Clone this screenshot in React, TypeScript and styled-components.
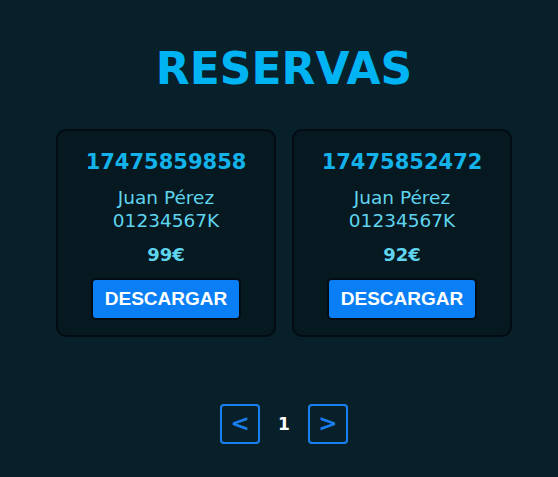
import styled, { createGlobalStyle } from "styled-components";

type Reserva = {
  id: string;
  nombre: string;
  dni: string;
  precio: number;
};

const reservas: Reserva[] = [
  { id: "17475859858", nombre: "Juan Pérez", dni: "01234567K", precio: 99 },
  { id: "17475852472", nombre: "Juan Pérez", dni: "01234567K", precio: 92 },
];

function App() {
  return (
    <>
      <GlobalStyle />
      <Page>
        <Title>RESERVAS</Title>
        <CardList>
          {reservas.map((r) => (
            <Card key={r.id}>
              <CardId>{r.id}</CardId>
              <Client>
                {r.nombre}
                <br />
                {r.dni}
              </Client>
              <Price>{r.precio}€</Price>
              <DownloadButton>DESCARGAR</DownloadButton>
            </Card>
          ))}
        </CardList>
        <Pagination>
          <PageButton>&lt;</PageButton>
          <PageNumber>1</PageNumber>
          <PageButton>&gt;</PageButton>
        </Pagination>
      </Page>
    </>
  );
}

const GlobalStyle = createGlobalStyle`
  html, body {
    margin: 0;
    padding: 0;
    background: #08202a;
  }
  body {
    font-family: "DejaVu Sans", Verdana, sans-serif;
  }
`;

const Page = styled.main`
  min-height: 477px;
  box-sizing: border-box;
  padding: 41px 0 0 10px;
  display: flex;
  flex-direction: column;
  align-items: center;
  background: #08202a;
`;

const Title = styled.h1`
  margin: 0;
  font-size: 44px;
  font-weight: bold;
  color: #00b4f4;
  line-height: 56px;
`;

const CardList = styled.section`
  display: flex;
  gap: 16px;
  margin-top: 32px;
`;

const Card = styled.article`
  width: 220px;
  box-sizing: border-box;
  padding: 17px 0 15px;
  display: flex;
  flex-direction: column;
  align-items: center;
  background: #061820;
  border: 2px solid #020c12;
  border-radius: 10px;
`;

const CardId = styled.h2`
  margin: 0;
  font-size: 21px;
  font-weight: bold;
  color: #14b2ea;
  line-height: 28px;
`;

const Client = styled.p`
  margin: 10px 0 0;
  font-size: 18.5px;
  line-height: 23px;
  text-align: center;
  color: #5fd4ee;
`;

const Price = styled.p`
  margin: 12px 0 0;
  font-size: 18px;
  font-weight: bold;
  line-height: 22px;
  color: #5fd4ee;
`;

const DownloadButton = styled.button`
  margin-top: 12px;
  height: 42px;
  padding: 0 12px;
  font-family: "Liberation Sans", Arial, sans-serif;
  font-size: 19px;
  font-weight: bold;
  color: #ffffff;
  background: #0a7ff5;
  border: 2px solid #020c12;
  border-radius: 5px;
  cursor: pointer;
`;

const Pagination = styled.nav`
  display: flex;
  align-items: center;
  gap: 18px;
  margin-top: 67px;
`;

const PageButton = styled.button`
  width: 40px;
  height: 40px;
  padding: 0 0 2px;
  font-family: "DejaVu Sans", Verdana, sans-serif;
  font-size: 23px;
  font-weight: bold;
  color: #1a7ff0;
  background: transparent;
  border: 2px solid #1a7ff0;
  border-radius: 4px;
  cursor: pointer;
`;

const PageNumber = styled.span`
  font-size: 17px;
  font-weight: bold;
  color: #ffffff;
`;

export default App;
